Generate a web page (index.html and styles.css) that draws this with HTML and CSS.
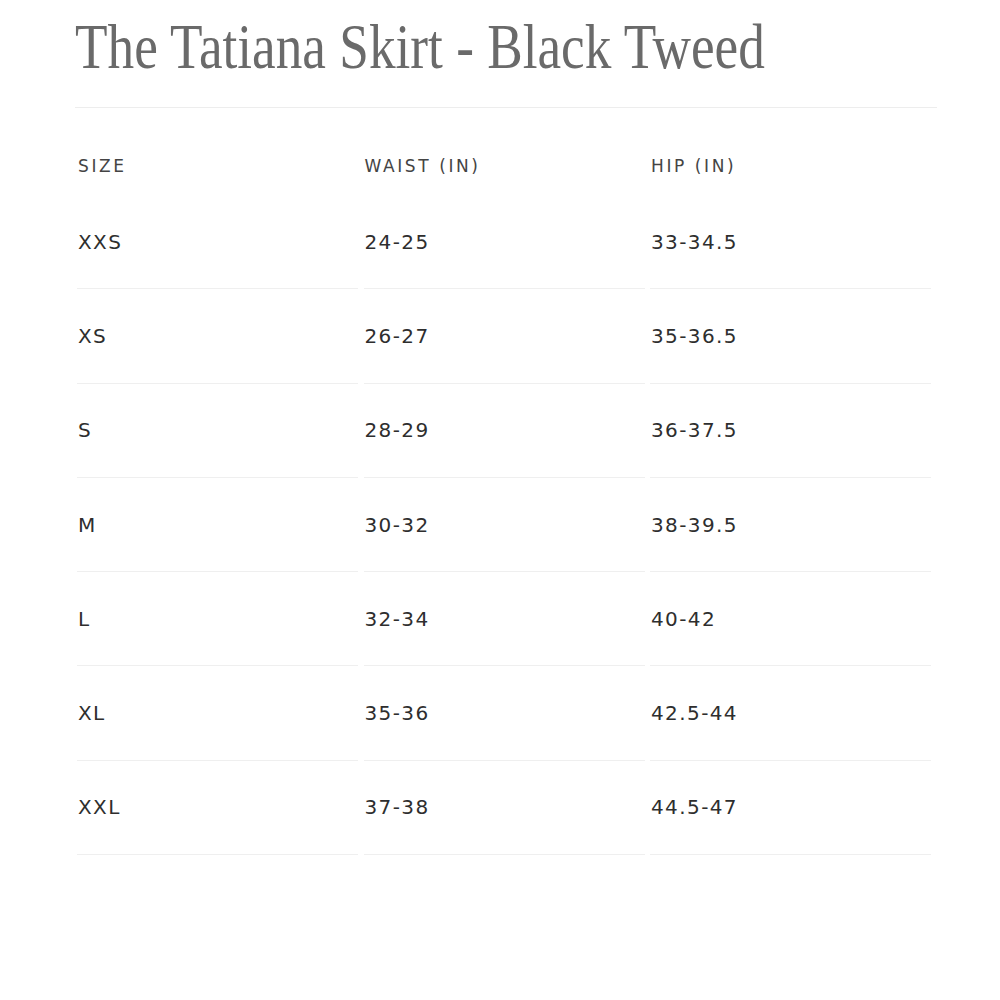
FILE: index.html
```html
<!DOCTYPE html>
<html>
<head>
<meta charset="utf-8">
<link rel="stylesheet" href="styles.css">
</head>
<body>
<div class="page">
  <h1 class="title"><span class="title-text">The Tatiana Skirt - Black Tweed</span></h1>
  <div class="divider"></div>
  <div class="chart">
    <div class="head">SIZE</div><div class="head">WAIST (IN)</div><div class="head">HIP (IN)</div>
    <div class="cell">XXS</div><div class="cell">24-25</div><div class="cell">33-34.5</div>
    <div class="cell">XS</div><div class="cell">26-27</div><div class="cell">35-36.5</div>
    <div class="cell">S</div><div class="cell">28-29</div><div class="cell">36-37.5</div>
    <div class="cell">M</div><div class="cell">30-32</div><div class="cell">38-39.5</div>
    <div class="cell">L</div><div class="cell">32-34</div><div class="cell">40-42</div>
    <div class="cell">XL</div><div class="cell">35-36</div><div class="cell">42.5-44</div>
    <div class="cell">XXL</div><div class="cell">37-38</div><div class="cell">44.5-47</div>
  </div>
</div>
</body>
</html>
```
FILE: styles.css
```css
html, body {
  margin: 0;
  padding: 0;
  background: #ffffff;
}
.page {
  padding: 16px 0 0 75px;
  width: 862px;
}
.title {
  margin: 0;
  height: 63px;
  font-family: "Liberation Serif", "Times New Roman", serif;
  font-weight: normal;
  font-size: 63px;
  line-height: 63px;
  color: #6a6a6a;
  white-space: nowrap;
}
.title-text {
  display: inline-block;
  transform: scaleX(0.845);
  transform-origin: left center;
}
.divider {
  margin-top: 28px;
  height: 1px;
  background: #ededed;
}
.chart {
  display: grid;
  grid-template-columns: 281px 281px 281px;
  column-gap: 5.5px;
  margin-left: 2px;
  font-family: "DejaVu Sans", sans-serif;
}
.head {
  padding: 48px 0 19px 1px;
  font-size: 17px;
  line-height: 20px;
  letter-spacing: 2.6px;
  color: #444444;
}
.cell {
  display: flex;
  align-items: center;
  height: 93.3px;
  padding-left: 1px;
  border-bottom: 1px solid #efefef;
  font-size: 20px;
  letter-spacing: 1.4px;
  color: #2e2e2e;
}
```
